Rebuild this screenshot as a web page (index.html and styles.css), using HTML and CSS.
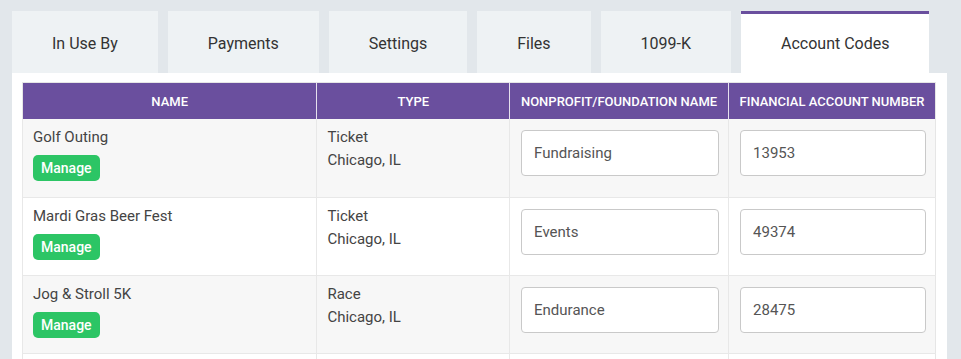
FILE: index.html
```html
<!DOCTYPE html>
<html>
<head>
<meta charset="utf-8">
<link rel="stylesheet" href="styles.css">
</head>
<body>
<div class="page">
  <div class="tabs">
    <div class="tab">In Use By</div>
    <div class="tab">Payments</div>
    <div class="tab">Settings</div>
    <div class="tab">Files</div>
    <div class="tab">1099-K</div>
    <div class="tab active">Account Codes</div>
  </div>
  <div class="panel">
    <table class="codes">
      <colgroup>
        <col class="c-name"><col class="c-type"><col class="c-org"><col class="c-acct">
      </colgroup>
      <thead>
        <tr>
          <th>NAME</th>
          <th>TYPE</th>
          <th>NONPROFIT/FOUNDATION NAME</th>
          <th>FINANCIAL ACCOUNT NUMBER</th>
        </tr>
      </thead>
      <tbody>
        <tr class="odd">
          <td><div class="line">Golf Outing</div><span class="manage">Manage</span></td>
          <td><div class="line">Ticket</div><div class="line">Chicago, IL</div></td>
          <td><input class="field" type="text" value="Fundraising"></td>
          <td><input class="field" type="text" value="13953"></td>
        </tr>
        <tr>
          <td><div class="line">Mardi Gras Beer Fest</div><span class="manage">Manage</span></td>
          <td><div class="line">Ticket</div><div class="line">Chicago, IL</div></td>
          <td><input class="field" type="text" value="Events"></td>
          <td><input class="field" type="text" value="49374"></td>
        </tr>
        <tr class="odd">
          <td><div class="line">Jog &amp; Stroll 5K</div><span class="manage">Manage</span></td>
          <td><div class="line">Race</div><div class="line">Chicago, IL</div></td>
          <td><input class="field" type="text" value="Endurance"></td>
          <td><input class="field" type="text" value="28475"></td>
        </tr>
        <tr>
          <td><div class="line">Spring Gala</div><span class="manage">Manage</span></td>
          <td><div class="line">Ticket</div><div class="line">Chicago, IL</div></td>
          <td><input class="field" type="text" value="Events"></td>
          <td><input class="field" type="text" value="10482"></td>
        </tr>
      </tbody>
    </table>
  </div>
</div>
</body>
</html>
```

FILE: styles.css
```css
* { box-sizing: border-box; }
html, body {
  margin: 0;
  padding: 0;
  background: #e2e7eb;
  font-family: Roboto, "Liberation Sans", Arial, sans-serif;
  color: #333;
  overflow: hidden;
}
.page {
  padding: 11px 14px 0 12px;
  height: 359px;
}
.tabs {
  display: flex;
  gap: 10px;
  height: 62px;
}
.tab {
  background: #eef2f4;
  padding: 2px 40px 0 40px;
  display: flex;
  align-items: center;
  justify-content: center;
  font-size: 16px;
  color: #333;
  white-space: nowrap;
}
.tab.active {
  background: #fff;
  border-top: 3px solid #6a4f9e;
  padding: 0 39px 1px 40px;
}
.panel {
  background: #fff;
  padding: 9px 11px 0 10px;
  height: 300px;
}
.codes {
  width: 914px;
  border-collapse: collapse;
  border: 1px solid #e6e6e6;
  font-size: 15px;
}
.c-name { width: 295px; }
.c-type { width: 193px; }
.c-org { width: 219px; }
.c-acct { width: 207px; }
.codes th {
  background: #6a4f9e;
  color: #fff;
  font-weight: 500;
  font-size: 13px;
  height: 36px;
  padding: 1px 4px 0;
  text-align: center;
  border-left: 1px solid #e6e1ee;
  white-space: nowrap;
}
.codes th:first-child { border-left: none; }
.codes td {
  padding: 7px 10px 0 10px;
  vertical-align: top;
  border-top: 1px solid #e8e8e8;
  border-left: 1px solid #e8e8e8;
  height: 78px;
  color: #444;
}
.codes tbody tr:first-child td { border-top: none; height: 79px; }
.codes tr.odd td { background: #f7f7f7; }
.line {
  line-height: 23px;
  font-size: 15px;
}
.manage {
  display: inline-block;
  margin-top: 6px;
  background: #2cc565;
  color: #fff;
  font-weight: 500;
  font-size: 14px;
  line-height: 26px;
  height: 26px;
  padding: 0 8px;
  border-radius: 5px;
}
.field {
  display: block;
  width: 100%;
  height: 46px;
  margin: 4px 0 0 1px;
  border: 1px solid #c9c9c9;
  border-radius: 4px;
  background: #fff;
  padding: 0 12px;
  font-family: Roboto, "Liberation Sans", Arial, sans-serif;
  font-size: 15px;
  color: #555;
}
```
